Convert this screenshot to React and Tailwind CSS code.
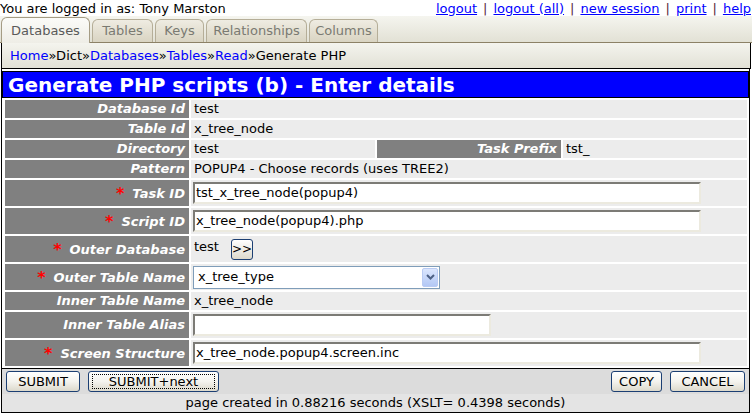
import React from "react";

const F = { fontFamily: '"DejaVu Sans", Verdana, sans-serif' };

function Tab({ label, active, w }) {
  return (
    <div
      className={
        "mr-[2px] flex items-center justify-center rounded-t-[6px] border border-b-0 px-[8px] text-[13px] " +
        (active
          ? "h-[26px] self-end border-[#a59c84] bg-gradient-to-b from-[#fbfbf8] to-[#eeede6] text-[#5a5a5a] relative top-[1px]"
          : "h-[23px] self-end border-[#b5ae98] bg-gradient-to-b from-[#efece2] to-[#d9d4c2] text-[#7a7a72]")
      }
      style={{ width: w }}
    >
      {label}
    </div>
  );
}

function XPButton({ children, className = "", focus }) {
  return (
    <button
      className={
        "flex h-[21px] items-center justify-center rounded-[3px] border border-[#1c3f73] bg-gradient-to-b from-[#ffffff] via-[#f4f3ee] to-[#dcd9cc] text-[13px] text-black " +
        className
      }
      style={F}
    >
      {focus ? (
        <span className="flex h-[15px] w-[calc(100%-6px)] items-center justify-center border border-dotted border-black">
          {children}
        </span>
      ) : (
        children
      )}
    </button>
  );
}

function Label({ children, req }) {
  return (
    <td className="bg-[#808080] py-0 pr-[4px] text-right text-[13px] font-bold italic text-white">
      {req && <span className="relative top-[1px] mr-[8px] not-italic text-[16px] leading-none text-[#ff0000]">*</span>}
      {children}
    </td>
  );
}

function TextInput({ value, w }) {
  return (
    <div
      className="flex h-[22px] items-center border-2 border-t-[#7c7b76] border-l-[#7c7b76] border-r-[#eceadf] border-b-[#eceadf] bg-white pl-[1px] text-[13px] text-black"
      style={{ width: w }}
    >
      {value}
    </div>
  );
}

function Sep() {
  return <span className="mx-[6px] text-[#5a2a3a]">|</span>;
}

export default function App() {
  return (
    <div className="h-[414px] w-[752px] overflow-hidden bg-white text-black" style={F}>
      {/* top line */}
      <div className="flex h-[16px] items-center justify-between whitespace-nowrap text-[13px] leading-none">
        <span>You are logged in as: Tony Marston</span>
        <span className="mr-[1px]">
          <a className="text-[#0000ff] underline">logout</a>
          <Sep />
          <a className="text-[#0000ff] underline">logout (all)</a>
          <Sep />
          <a className="text-[#0000ff] underline">new session</a>
          <Sep />
          <a className="text-[#0000ff] underline">print</a>
          <Sep />
          <a className="text-[#0000ff] underline">help</a>
        </span>
      </div>

      {/* tabs */}
      <div className="flex h-[27px] items-end border-b border-[#8c8166] bg-gradient-to-b from-[#f5f5ef] to-[#e2e1d5] pl-[1px]">
        <Tab label="Databases" active w={89} />
        <Tab label="Tables" w={61} />
        <Tab label="Keys" w={49} />
        <Tab label="Relationships" w={101} />
        <Tab label="Columns" w={69} />
      </div>

      {/* breadcrumb */}
      <div className="ml-[1px] flex h-[26px] w-[750px] items-center border-x border-b border-black bg-gradient-to-b from-[#f4f4ee] to-[#e2e1d6] pl-[8px] text-[13px]">
        <a className="text-[#0000ff]">Home</a>»Dict»<a className="text-[#0000ff]">Databases</a>»
        <a className="text-[#0000ff]">Tables</a>»<a className="text-[#0000ff]">Read</a>»Generate PHP
      </div>

      {/* main */}
      <div className="ml-[1px] w-[749px] border-x border-b border-black pt-[2px]">
        <div className="flex h-[27px] items-center border border-black bg-[#0000ff] pl-[5px] text-[20px] font-bold text-white">
          Generate PHP scripts (b) - Enter details
        </div>
        <table className="ml-[1px] w-[746px] table-fixed border-separate border-spacing-[2px] text-[13px] leading-[16px]">
          <colgroup>
            <col className="w-[184px]" />
            <col className="w-[184px]" />
            <col className="w-[184px]" />
            <col className="w-[184px]" />
          </colgroup>
          <tbody>
            <tr className="h-[18px]">
              <Label>Database Id</Label>
              <td colSpan={3} className="bg-[#ececec] py-0 pl-[3px]">test</td>
            </tr>
            <tr className="h-[18px]">
              <Label>Table Id</Label>
              <td colSpan={3} className="bg-[#ececec] py-0 pl-[3px]">x_tree_node</td>
            </tr>
            <tr className="h-[18px]">
              <Label>Directory</Label>
              <td className="bg-[#ececec] py-0 pl-[3px]">test</td>
              <Label>Task Prefix</Label>
              <td className="bg-[#ececec] py-0 pl-[3px]">tst_</td>
            </tr>
            <tr className="h-[18px]">
              <Label>Pattern</Label>
              <td colSpan={3} className="bg-[#ececec] py-0 pl-[3px]">POPUP4 - Choose records (uses TREE2)</td>
            </tr>
            <tr className="h-[26px]">
              <Label req>Task ID</Label>
              <td colSpan={3} className="bg-[#ececec] py-0 pl-[2px]">
                <TextInput value="tst_x_tree_node(popup4)" w={508} />
              </td>
            </tr>
            <tr className="h-[26px]">
              <Label req>Script ID</Label>
              <td colSpan={3} className="bg-[#ececec] py-0 pl-[2px]">
                <TextInput value="x_tree_node(popup4).php" w={508} />
              </td>
            </tr>
            <tr className="h-[26px]">
              <Label req>Outer Database</Label>
              <td colSpan={3} className="bg-[#ececec] py-0 pl-[3px]">
                <div className="flex items-center">
                  <span className="relative top-[-2px]">test</span>
                  <button className="ml-[12px] flex h-[21px] w-[22px] items-center justify-center rounded-[3px] border border-[#1c3f73] bg-gradient-to-b from-white to-[#dcd9cc] text-[12px]">
                    &gt;&gt;
                  </button>
                </div>
              </td>
            </tr>
            <tr className="h-[26px]">
              <Label req>Outer Table Name</Label>
              <td colSpan={3} className="bg-[#ececec] py-0 pl-[2px]">
                <div className="flex h-[23px] w-[247px] items-center border border-[#7f9db9] bg-white pl-[4px]">
                  <span className="flex-1">x_tree_type</span>
                  <span className="mr-[1px] flex h-[19px] w-[16px] items-center justify-center rounded-[2px] border border-[#b9cbf3] bg-gradient-to-b from-[#dbe6fd] to-[#b3c8f5]">
                    <svg width="9" height="6" viewBox="0 0 9 6">
                      <path d="M1 1 L4.5 4.5 L8 1" stroke="#4d6185" strokeWidth="2" fill="none" />
                    </svg>
                  </span>
                </div>
              </td>
            </tr>
            <tr className="h-[18px]">
              <Label>Inner Table Name</Label>
              <td colSpan={3} className="bg-[#ececec] py-0 pl-[3px]">x_tree_node</td>
            </tr>
            <tr className="h-[26px]">
              <Label>Inner Table Alias</Label>
              <td colSpan={3} className="bg-[#ececec] py-0 pl-[2px]">
                <TextInput value="" w={298} />
              </td>
            </tr>
            <tr className="h-[26px]">
              <Label req>Screen Structure</Label>
              <td colSpan={3} className="bg-[#ececec] py-0 pl-[2px]">
                <TextInput value="x_tree_node.popup4.screen.inc" w={508} />
              </td>
            </tr>
          </tbody>
        </table>
        {/* buttons */}
        <div className="flex h-[26px] items-center justify-between border-t border-black bg-[#dcdcdc] px-[4px]">
          <div className="flex gap-[8px]">
            <XPButton className="w-[74px]">SUBMIT</XPButton>
            <XPButton className="w-[131px]" focus>SUBMIT+next</XPButton>
          </div>
          <div className="flex gap-[8px]">
            <XPButton className="w-[51px]">COPY</XPButton>
            <XPButton className="w-[75px]">CANCEL</XPButton>
          </div>
        </div>
        {/* footer */}
        <div className="flex h-[18px] items-center justify-center bg-[#e4e4e4] text-[13px]">
          page created in 0.88216 seconds (XSLT= 0.4398 seconds)
        </div>
      </div>
    </div>
  );
}
